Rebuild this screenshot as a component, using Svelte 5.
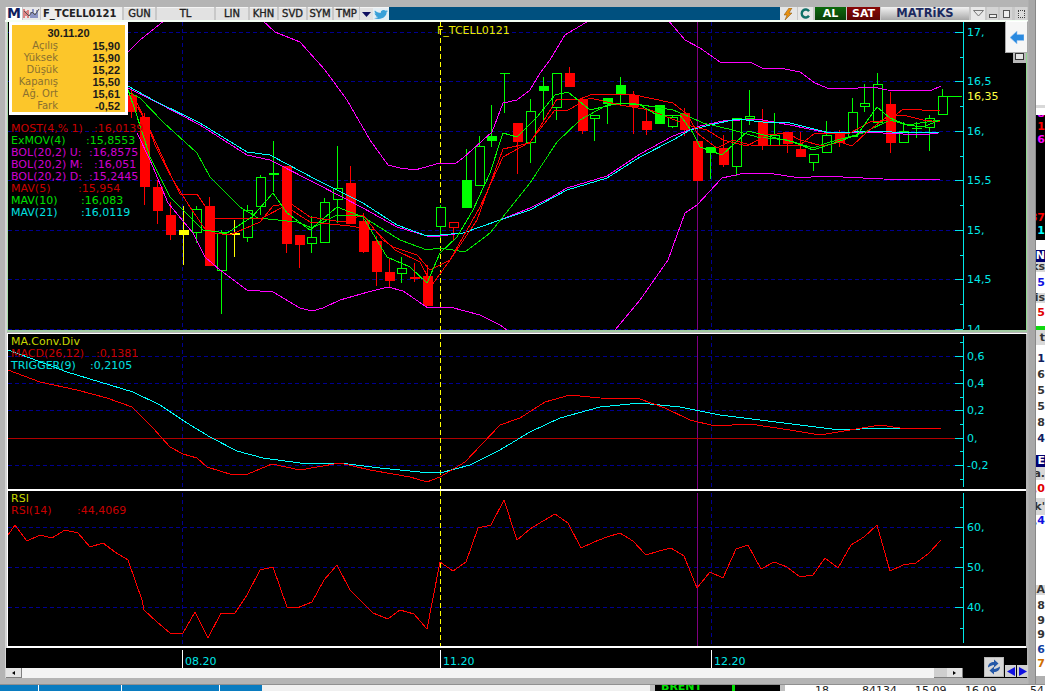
<script>
	// wickTop, wickBottom, bodyTop, bodyBottom, kind (r red, g green, h hollow green, o hollow red, y yellow)
	const candles = [
		[90, 118, 95, 112, 'r'], [113, 205, 117, 187, 'r'], [180, 224, 187, 211, 'r'], [202, 240, 215, 235, 'r'],
		[206, 265, 230, 235, 'y'], [206, 243, 209, 232, 'h'], [197, 266, 206, 266, 'r'], [230, 314, 233, 270, 'h'],
		[220, 257, 233, 235, 'y'], [205, 242, 210, 237, 'h'], [175, 215, 177, 206, 'h'], [141, 192, 173, 175, 'g'],
		[166, 253, 166, 244, 'r'], [235, 268, 235, 245, 'r'], [216, 253, 237, 243, 'h'], [198, 242, 202, 242, 'h'],
		[146, 223, 188, 199, 'h'], [166, 224, 183, 224, 'r'], [213, 253, 221, 252, 'r'], [236, 286, 241, 272, 'r'],
		[259, 287, 272, 281, 'r'], [257, 283, 268, 273, 'h'], [263, 282, 277, 279, 'r'], [265, 306, 276, 306, 'r'],
		[205, 238, 207, 226, 'h'], [222, 240, 222, 227, 'o'], [149, 208, 180, 208, 'g'], [136, 185, 146, 185, 'h'],
		[105, 147, 136, 141, 'g'], [73, 113, 73, 74, 'g'], [123, 174, 123, 142, 'r'], [99, 163, 111, 142, 'h'],
		[77, 122, 86, 91, 'g'], [73, 120, 73, 107, 'h'], [67, 87, 73, 87, 'r'], [97, 134, 99, 131, 'r'],
		[115, 141, 115, 118, 'h'], [98, 124, 98, 104, 'g'], [77, 105, 85, 94, 'g'], [91, 134, 95, 107, 'r'],
		[110, 135, 121, 130, 'r'], [105, 124, 105, 124, 'g'], [115, 128, 117, 126, 'h'], [108, 136, 113, 130, 'r'],
		[141, 181, 141, 181, 'r'], [147, 179, 147, 153, 'g'], [135, 167, 148, 165, 'r'], [118, 176, 118, 166, 'h'],
		[90, 125, 116, 118, 'h'], [109, 150, 121, 145, 'r'], [113, 145, 135, 145, 'h'], [132, 153, 132, 144, 'r'],
		[132, 157, 149, 157, 'r'], [154, 171, 154, 162, 'h'], [121, 153, 135, 152, 'h'], [130, 147, 134, 143, 'r'],
		[98, 137, 112, 136, 'h'], [84, 112, 103, 106, 'h'], [73, 122, 84, 122, 'h'], [92, 153, 104, 143, 'r'],
		[122, 142, 131, 142, 'h'], [122, 138, 128, 129, 'g'], [115, 151, 118, 127, 'h'], [89, 114, 96, 114, 'h']
	];

	const candleX = (i) => Math.round(131.4 + 12.86 * i);
	const colors = { r: '#ff0000', g: '#00ff00', h: '#00ff00', o: '#ff0000', y: '#ffff00' };

	const priceLines = [
		{
			color: '#ff00ff',
			pts: '128,52 140,40 165,20 M262,20 275,32 300,42 325,70 347,100 370,140 388,165 400,168 415,170 440,163 455,164 463,158 492,132 503,103 517,100 530,90 540,73 550,60 565,35 590,20 M668,20 685,40 700,48 720,62 750,62 762,68 780,68 800,72 815,83 827,88 843,89 873,87 887,90 930,91 941,86'
		},
		{
			color: '#ff00ff',
			pts: '137,133 150,160 168,203 193,233 205,257 220,270 247,290 273,292 300,308 312,311 323,308 340,300 368,292 388,287 403,291 428,308 450,307 480,315 500,325 515,336 M610,336 640,300 668,260 685,213 697,205 722,178 745,173 768,173 800,178 822,176 883,179 940,180'
		},
		{
			color: '#ff00ff',
			pts: '128,88 160,104 200,125 247,155 270,160 317,184 363,208 397,227 427,236 440,236 463,233 500,220 530,208 550,198 567,188 607,176 640,154 673,136 700,126 723,121 757,119 790,125 823,132 883,133 923,135 938,133'
		},
		{
			color: '#00ffff',
			pts: '128,86 153,100 200,123 247,152 270,155 317,180 363,203 397,225 427,236 440,235 463,233 500,220 530,210 567,190 607,178 640,157 673,140 690,130 710,125 737,119 763,122 790,123 830,133 877,131 907,133 940,132'
		},
		{
			color: '#00e800',
			pts: '128,92 140,98 163,122 197,153 210,177 240,207 258,218 297,222 312,228 337,215 360,215 400,240 427,250 440,248 465,252 490,233 530,183 557,142 580,120 607,105 630,103 673,110 690,117 703,123 733,130 757,137 787,140 813,148 830,142 863,133 890,120 907,125 940,120'
		},
		{
			color: '#ff0000',
			pts: '132,93 150,130 173,180 190,207 207,232 230,235 260,222 273,206 290,203 310,217 343,222 363,215 383,240 393,247 417,255 430,270 450,260 477,220 503,149 530,143 557,99 577,100 593,94 630,94 673,103 688,115 697,133 717,148 733,140 750,145 790,146 800,145 815,133 850,133 870,122 890,120 903,109 940,111'
		},
		{
			color: '#ff0000',
			pts: '130,95 148,125 155,145 180,194 197,194 213,218 262,218 285,206 310,222 350,226 375,230 395,250 420,262 432,285 450,260 480,207 503,157 530,142 555,110 568,110 590,98 620,105 650,110 687,125 707,130 723,140 747,146 767,135 787,133 800,140 823,146 840,142 852,146 867,132 887,117 903,115 923,120 940,122'
		},
		{
			color: '#00ff00',
			pts: '128,90 135,110 150,157 170,197 203,230 227,233 252,217 273,193 287,213 310,230 337,207 363,217 387,257 410,267 427,283 440,253 457,237 473,210 490,173 503,133 517,137 537,117 555,95 568,92 590,110 620,103 640,105 657,115 680,115 693,133 700,147 722,155 748,131 772,137 793,142 813,150 837,142 857,135 877,107 890,118 907,125 923,127 940,120'
		}
	];

	const macdLines = [
		{
			color: '#00ffff',
			pts: '8,350 30,358 67,372 100,382 133,392 160,405 187,423 210,437 237,451 263,458 300,463 340,463 380,468 420,472 440,473 470,465 500,450 530,432 560,418 600,407 640,403 680,407 720,415 760,420 800,425 840,430 880,428 940,428'
		},
		{
			color: '#ff0000',
			pts: '8,370 40,382 77,390 107,398 132,407 153,428 170,447 183,454 197,458 207,467 233,475 248,474 272,464 300,470 340,463 370,470 410,477 427,482 440,477 465,462 500,425 520,418 545,402 570,395 600,398 640,399 665,408 690,420 715,426 750,424 790,430 820,435 850,430 880,425 900,428 941,428'
		}
	];

	const rsiLine =
		'8,535 15,525 27,541 40,535 52,538 65,530 78,533 90,547 103,543 115,552 128,560 142,600 144,610 157,622 170,633 183,633 195,612 208,638 221,613 235,613 247,595 260,570 273,567 287,607 297,608 312,602 324,580 337,565 350,590 360,600 373,613 388,619 400,610 414,614 427,629 440,562 453,571 466,562 478,528 491,525 504,500 517,540 530,529 543,521 555,514 568,523 581,548 594,542 607,537 620,533 633,541 646,555 659,551 671,548 684,556 697,588 710,572 723,578 736,549 748,545 761,569 774,562 787,567 800,577 813,575 825,558 838,568 851,545 864,537 877,525 890,571 903,565 916,563 929,553 941,540';

	const info = [
		['Açılış', '15,90'],
		['Yüksek', '15,90'],
		['Düşük', '15,22'],
		['Kapanış', '15,50'],
		['Ağ. Ort', '15,61'],
		['Fark', '-0,52']
	];

	const legend = [
		{ name: 'MOST(4,% 1)', value: ':16,0139', at: 83, color: '#c80000' },
		{ name: 'ExMOV(4)', value: ':15,8553', at: 75, color: '#00d800' },
		{ name: 'BOL(20,2) U:', value: ':16,8575', at: 78, color: '#d000d0' },
		{ name: 'BOL(20,2) M:', value: ':16,051', at: 83, color: '#d000d0' },
		{ name: 'BOL(20,2) D:', value: ':15,2445', at: 78, color: '#d000d0' },
		{ name: 'MAV(5)', value: ':15,954', at: 67, color: '#c80000' },
		{ name: 'MAV(10)', value: ':16,083', at: 70, color: '#00e000' },
		{ name: 'MAV(21)', value: ':16,0119', at: 70, color: '#00e0e0' }
	];

	const tabs = [
		{ label: 'GUN', w: 31 },
		{ label: 'TL', w: 57 },
		{ label: 'LIN', w: 32 },
		{ label: 'KHN', w: 27 },
		{ label: 'SVD', w: 27 },
		{ label: 'SYM', w: 24 },
		{ label: 'TMP', w: 25 }
	];

	const priceAxis = {
		ticks: [[32, '17,'], [81, '16,5'], [131, '16,'], [180, '15,5'], [230, '15,'], [279, '14,5'], [329, '14,']],
		minor: [57, 106, 156, 205, 255, 304],
		top: 22,
		bottom: 329
	};
	const macdAxis = {
		ticks: [[356, '0,6'], [383, '0,4'], [410, '0,2'], [438, '0,'], [465, '-0,2']],
		minor: [342, 370, 397, 424, 451, 479],
		top: 336,
		bottom: 487
	};
	const rsiAxis = {
		ticks: [[527, '60,'], [567, '50,'], [607, '40,']],
		minor: [507, 547, 587, 628],
		top: 493,
		bottom: 643
	};

	const sideRows = [
		{ h: 105, kind: 'white' },
		{ h: 3, kind: 'grey' },
		{ h: 7, kind: 'white' },
		{ h: 125, kind: 'dark', lines: [['8', '#ff00ff'], ['1', '#ff0000'], ['6', '#ff00ff'], ['', ''], ['', ''], ['', ''], ['', ''], ['', ''], ['87', '#ff0000'], ['1', '#00ffff']] },
		{ h: 10, kind: 'white' },
		{ h: 12, kind: 'navy', text: 'N' },
		{ h: 10, kind: 'grey', text: 'ks' },
		{ h: 21, kind: 'white', text: '5', color: '#1010e0' },
		{ h: 10, kind: 'grey', text: 'is' },
		{ h: 19, kind: 'white', text: '5', color: '#e00000' },
		{ h: 4, kind: 'white' },
		{ h: 4, kind: 'green' },
		{ h: 15, kind: 'grey', text: 't' },
		{ h: 110, kind: 'white', lines: [['1', '#102060'], ['6', '#333'], ['5', '#333'], ['5', '#333'], ['8', '#333'], ['4', '#102060']], step: 16 },
		{ h: 12, kind: 'navy', text: 'E' },
		{ h: 13, kind: 'grey', text: 'a.' },
		{ h: 18, kind: 'white', text: ',0', color: '#e00000' },
		{ h: 17, kind: 'grey', text: "k'" },
		{ h: 70, kind: 'white', text: ',4', color: '#1010e0', top: true },
		{ h: 10, kind: 'grey', text: 'A' },
		{ h: 81, kind: 'white', lines: [['8', '#333'], ['9', '#333'], ['9', '#333'], ['6', '#1040a0'], ['7', '#d07000']], step: 14.5 }
	];
</script>

{#snippet grid(rows, top, bottom)}
	{#each rows as y}
		<line class="grid" x1="8" x2="955" y1={y + 0.5} y2={y + 0.5} />
	{/each}
	<line class="grid" x1="182.5" x2="182.5" y1={top} y2={bottom} />
	<line class="grid" x1="711.5" x2="711.5" y1={top} y2={bottom} />
	<line class="cross" x1="697.5" x2="697.5" y1={top} y2={bottom} />
{/snippet}

{#snippet axis(a)}
	<line class="axis" x1="963.5" x2="963.5" y1={a.top} y2={a.bottom} />
	{#each a.minor as y}
		<line class="axis" x1="960" x2="963" y1={y + 0.5} y2={y + 0.5} />
	{/each}
	{#each a.ticks as [y, label]}
		<line class="axis" x1="955" x2="963" y1={y + 0.5} y2={y + 0.5} />
		<text class="axis-label" x="967" y={y + 4}>{label}</text>
	{/each}
{/snippet}

<div class="desk">
	<div class="upper">
		<div class="window">
			<div class="toolbar">
				<div class="logo">M</div>
				<div class="chart-icon">
					<svg width="17" height="13" viewBox="0 0 17 13">
						<path d="M1 2v9M3 4v5M5 3v8" stroke="#d02020" fill="none" />
						<path d="M8 5v6M10 2v9M12 6v5M14 3v8" stroke="#3040a0" fill="none" />
						<path d="M1 4 6 9 9 5 12 8 16 2" stroke="#555" fill="none" />
					</svg>
				</div>
				<div class="symbol">F_TCELL0121</div>
				{#each tabs as tab}
					<div class="tab" style:width="{tab.w}px">{tab.label}</div>
				{/each}
				<div class="tab drop">
					<svg width="9" height="6" viewBox="0 0 9 6"><path d="M0 0h9L4.500 5z" fill="#101060" /></svg>
				</div>
				<div class="tab bird">
					<svg width="14" height="11" viewBox="0 0 24 24" preserveAspectRatio="none">
						<path fill="#3aa0d8" d="M23.950 4.570a10 10 0 0 1-2.820.77 4.960 4.960 0 0 0 2.160-2.720c-.95.55-2 .95-3.120 1.180a4.920 4.920 0 0 0-8.380 4.480C7.690 8.100 4.070 6.130 1.640 3.160a4.820 4.820 0 0 0-.67 2.480c0 1.700.87 3.200 2.190 4.100a4.900 4.900 0 0 1-2.230-.61v.06c0 2.380 1.700 4.370 3.950 4.820a5 5 0 0 1-2.210.08 4.940 4.940 0 0 0 4.600 3.420A9.870 9.870 0 0 1 0 19.540a13.940 13.940 0 0 0 7.550 2.210c9.050 0 14-7.500 14-13.980 0-.21 0-.42-.02-.63a9.940 9.940 0 0 0 2.460-2.550z" />
					</svg>
				</div>
				<div class="bar-fill"></div>
				<div class="tools">
					<div class="tool bolt">
						<svg width="9" height="12" viewBox="0 0 9 12"><path d="M5 0 0 7h3l-2 5 7-7H5l3-5z" fill="#e89010" stroke="#805010" stroke-width=".5" /></svg>
					</div>
					<div class="tool again">
						<svg width="11" height="11" viewBox="0 0 11 11"><path d="M9 3.200A4 4 0 1 0 9 7.800" fill="none" stroke="#107068" stroke-width="2.400" /></svg>
					</div>
					<div class="trade al">AL</div>
					<div class="trade sat">SAT</div>
					<div class="brand">MATRiKS</div>
					<div class="winbtn drop-btn">
						<svg width="11" height="7" viewBox="0 0 11 7"><path d="M.5.500h10L5.500 6z" fill="#e8e8e8" stroke="#777" /></svg>
					</div>
					<div class="winbtn min-btn"><span class="glyph-min"></span></div>
					<div class="winbtn max-btn"><span class="glyph-max"></span></div>
					<div class="winbtn close-btn"><span class="glyph-close"></span></div>
				</div>
			</div>

			<div class="panes">
				<div class="pane top-pane">
					<svg class="chart" width="1018" height="308" viewBox="8 22 1018 308">
						{@render grid([32, 81, 131, 180, 230, 279, 329], 22, 331)}
						<line class="marker" x1="440.500" x2="440.500" y1="22" y2="331" />
						{#each candles as [wt, wb, bt, bb, kind], i}
							{@const x = candleX(i)}
							<line x1={x + 0.5} x2={x + 0.5} y1={wt} y2={wb} stroke={colors[kind]} />
							{#if kind === 'h' || kind === 'o'}
								<rect x={x - 4 + 0.5} y={bt + 0.5} width="9" height={bb - bt} fill="#000" stroke={colors[kind]} />
							{:else}
								<rect x={x - 4.5} y={bt} width="10" height={Math.max(bb - bt, 1)} fill={colors[kind]} />
							{/if}
						{/each}
						{#each priceLines as l}
							{#each l.pts.split(' M') as part}
								<polyline class="line" points={part} stroke={l.color} />
							{/each}
						{/each}
						<line x1="947" x2="962" y1="96.500" y2="96.500" stroke="#00ff00" />
						{@render axis(priceAxis)}
						<text class="axis-label last" x="967" y="100">16,35</text>
						<text class="title" x="437" y="34">F_TCELL0121</text>
					</svg>

					<div class="info">
						<div class="info-date">30.11.20</div>
						{#each info as [label, value]}
							<div class="info-row"><span>{label}</span><b>{value}</b></div>
						{/each}
					</div>

					<div class="legend">
						{#each legend as item}
							<div class="legend-row" style:color={item.color}>
								<span class="legend-name" style:width="{item.at}px">{item.name}</span>{item.value}
							</div>
						{/each}
					</div>

					<div class="side-tab">
						<svg width="14" height="13" viewBox="0 0 14 13">
							<path d="M0 6.500 7 0v3.500h7v6H7V13z" fill="#2a8ae0" stroke="#a0c8f0" stroke-width=".6" />
						</svg>
					</div>
					<div class="side-stub"><span></span></div>
				</div>

				<div class="pane macd">
					<svg class="chart" width="1018" height="155" viewBox="8 334 1018 155">
						{@render grid([356, 383, 410, 465], 336, 489)}
						<line x1="8" x2="963" y1="438.500" y2="438.500" stroke="#b00000" />
						<line class="marker" x1="440.500" x2="440.500" y1="334" y2="489" />
						{#each macdLines as l}
							<polyline class="line" points={l.pts} stroke={l.color} />
						{/each}
						{@render axis(macdAxis)}
					</svg>
					<div class="legend low">
						<div class="legend-row name">MA.Conv.Div</div>
						<div class="legend-row red"><span class="legend-name w-macd">MACD(26,12)</span>:0,1381</div>
						<div class="legend-row cyan"><span class="legend-name w-trig">TRIGGER(9)</span>:0,2105</div>
					</div>
				</div>

				<div class="pane rsi">
					<svg class="chart" width="1018" height="155" viewBox="8 491 1018 155">
						{@render grid([527, 567, 607], 493, 646)}
						<line class="marker" x1="440.500" x2="440.500" y1="491" y2="646" />
						<polyline class="line" points={rsiLine} stroke="#ff0000" />
						{@render axis(rsiAxis)}
					</svg>
					<div class="legend low">
						<div class="legend-row name">RSI</div>
						<div class="legend-row red"><span class="legend-name w-rsi">RSI(14)</span>:44,4069</div>
					</div>
				</div>

				<div class="time-block">
					<svg class="time" width="1021" height="20" viewBox="6 648 1021 20">
						{#each [[182, '08.20'], [440, '11.20'], [711, '12.20']] as [x, label]}
							<line x1={x + 0.5} x2={x + 0.5} y1="650" y2="668" stroke="#fff" />
							<text class="axis-label" x={x + 3} y="665">{label}</text>
						{/each}
					</svg>
					<div class="hscroll">
						<div class="sbtn left"><i class="arrow-l"></i></div>
						<div class="sthumb"></div>
						<div class="sbtn right"><i class="arrow-r"></i></div>
					</div>
					<div class="nav">
						<div class="refresh">
							<svg width="16" height="16" viewBox="0 0 16 16">
								<path d="M2 8.500C2 4.500 5 3 8 3V0.500L12.500 4.500 8 8.500V6C6 6 4.500 7 2 8.500z" fill="#2458a8" />
								<path d="M14 7.500C14 11.500 11 13 8 13V15.500L3.500 11.500 8 7.500V10C10 10 11.500 9 14 7.500z" fill="#2458a8" />
							</svg>
						</div>
						<div class="step"><svg width="8" height="9" viewBox="0 0 8 9"><path d="M8 0v9L0 4.500z" fill="#1010e0" /></svg></div>
						<div class="step"><svg width="8" height="9" viewBox="0 0 8 9"><path d="M0 0v9l8-4.500z" fill="#1010e0" /></svg></div>
					</div>
				</div>
			</div>
		</div>

		<div class="side">
			{#each sideRows as row}
				<div class="side-row {row.kind}" class:at-top={row.top} style:height="{row.h}px" style:color={row.color}>
					{#if row.lines}
						{#each row.lines as [t, c]}
							<div class="side-line" style:color={c} style:height="{row.step ?? 13}px">{t}</div>
						{/each}
					{:else}
						<span>{row.text ?? ''}</span>
					{/if}
				</div>
			{/each}
		</div>
	</div>

	<div class="taskbar">
		<div class="tasks">
			<span class="task w1"></span>
			<span class="task w2"></span>
			<span class="task w3"></span>
			<span class="task w4"></span>
		</div>
		<div class="task-gap"></div>
		<div class="peek-btn"></div>
		<div class="peek">BRENT<i class="peek-mark"></i></div>
		<div class="peek-btn"></div>
		<div class="numbers">
			<span class="n1">18</span>
			<span class="n2">84134</span>
			<span class="n3">15,09</span>
			<span class="n4">16,09</span>
			<span class="n5">54</span>
		</div>
	</div>
</div>

<style>
	:global(body) {
		margin: 0;
		background: #b0b0b0;
	}

	.desk {
		width: 1045px;
		height: 691px;
		overflow: hidden;
		font-family: 'DejaVu Sans', Verdana, sans-serif;
		font-size: 11px;
	}

	.upper {
		display: flex;
		height: 684px;
	}

	.window {
		width: 1036px;
		flex: none;
		box-sizing: border-box;
		padding: 7px 0 6px 5px;
		background: linear-gradient(90deg, #b4b4b4 1028px, #a8a8a8 1029px, #a8a8a8 1035px, #888 1035px);
	}

	.toolbar {
		display: flex;
		height: 13px;
		width: 1023px;
		gap: 2px;
		background: #c8c8c8;
		border-bottom: 2px solid #f4fff4;
	}

	.logo {
		width: 16px;
		margin-left: 1px;
		background: #fff;
		color: #102060;
		font-weight: bold;
		font-size: 14px;
		line-height: 13px;
		text-align: center;
	}

	.chart-icon {
		width: 17px;
		margin-left: -1px;
		background: #e8e8e8;
		line-height: 0;
	}

	.symbol {
		width: 81px;
		margin-left: -1px;
		background: #ececec;
		color: #222;
		font-weight: bold;
		font-size: 10px;
		line-height: 13px;
		padding-left: 2px;
		box-sizing: border-box;
		white-space: nowrap;
		overflow: hidden;
	}

	.tab {
		background: #e2e2e2;
		border-top: 1px solid #f4f4f4;
		box-sizing: border-box;
		color: #222;
		font-size: 10px;
		-webkit-text-stroke: 0.35px #222;
		line-height: 12px;
		text-align: center;
		white-space: nowrap;
		overflow: hidden;
	}

	.drop {
		width: 13px;
		margin-left: -1px;
		line-height: 9px;
		padding-top: 2px;
	}

	.bird {
		width: 16px;
		margin-left: -2px;
		background: #e4eef4;
		line-height: 0;
		padding-top: 1px;
	}

	.bar-fill {
		flex: 1;
		margin-left: -2px;
		background: #00507f;
	}

	.tools {
		display: flex;
		margin-left: -2px;
		padding-right: 1px;
	}

	.tool {
		background: #e6e6e6;
		display: flex;
		align-items: center;
		justify-content: center;
	}

	.bolt {
		width: 17px;
	}

	.again {
		width: 15px;
		margin-left: 1px;
	}

	.trade {
		color: #fff;
		font-weight: bold;
		font-size: 11px;
		line-height: 13px;
		text-align: center;
	}

	.al {
		width: 31px;
		margin-left: 2px;
		background: linear-gradient(#0c6a0c, #0a3f0a);
	}

	.sat {
		width: 33px;
		margin-left: 1px;
		background: linear-gradient(#8a0808, #5c0404);
	}

	.brand {
		width: 88px;
		margin-left: 1px;
		background: linear-gradient(#f2f2f2, #a8a8a8);
		color: #1c2a60;
		font-weight: bold;
		font-size: 11.500px;
		line-height: 13px;
		text-align: center;
	}

	.winbtn {
		background: #d4d4d4;
		display: flex;
		align-items: center;
		justify-content: center;
	}

	.drop-btn {
		width: 14px;
		margin-left: 2px;
		background: #e8e8e8;
	}

	.min-btn {
		width: 11px;
		margin-left: 2px;
	}

	.max-btn {
		width: 12px;
		margin-left: 2px;
	}

	.close-btn {
		width: 12px;
		margin-left: 3px;
	}

	.glyph-min {
		width: 6px;
		height: 2px;
		border: 1px solid #555;
		margin-top: 4px;
		background: #eee;
	}

	.glyph-max {
		width: 5px;
		height: 6px;
		border: 1px solid #555;
		background: #eee;
	}

	.glyph-close {
		width: 5px;
		height: 6px;
		border: 1px dotted #444;
		background: #ddd;
	}

	.panes {
		border-left: 2px solid #d4d4d4;
	}

	.pane {
		position: relative;
		background: #000;
		box-sizing: border-box;
		border-left: 1px solid #fff;
	}

	.top-pane {
		width: 1020px;
		height: 310px;
		border-left-color: #a8dca8;
		border-right: 1px solid #90d890;
		border-bottom: 2px solid #a0c8a0;
		margin-bottom: 2px;
		box-shadow: 0 1px 0 #b4b4b4, 0 2px 0 #fff;
	}

	.macd,
	.rsi {
		width: 1019px;
		height: 157px;
		border-bottom: 2px solid #fff;
	}

	.chart {
		display: block;
	}

	.grid {
		stroke: #000090;
		stroke-dasharray: 4 3;
	}

	.cross {
		stroke: #800080;
	}

	.marker {
		stroke: #ffff00;
		stroke-dasharray: 5 3;
	}

	.axis {
		stroke: #00e8e8;
	}

	.axis-label {
		fill: #00e8e8;
		font-size: 11px;
	}

	.last {
		fill: #ffff40;
	}

	.title {
		fill: #e8e800;
		font-size: 11px;
	}

	.line {
		fill: none;
		shape-rendering: crispEdges;
	}

	.chart line,
	.chart rect,
	.time line {
		shape-rendering: crispEdges;
	}

	.info {
		position: absolute;
		left: 1px;
		top: 0;
		width: 113px;
		height: 87px;
		border: 3px solid #fff;
		background: #fcc62a;
		line-height: 12px;
	}

	.info-date {
		text-align: center;
		font-family: 'Liberation Sans', Arial, sans-serif;
		font-weight: bold;
		font-size: 11px;
		color: #1a1a1a;
		padding-top: 2px;
		margin-bottom: 1px;
	}

	.info-row {
		display: flex;
		justify-content: space-between;
		color: #8a7030;
		font-size: 10px;
		padding-right: 5px;
	}

	.info-row span {
		width: 46px;
		text-align: right;
		white-space: nowrap;
	}

	.info-row b {
		color: #1a1a1a;
		font-family: 'Liberation Sans', Arial, sans-serif;
		font-size: 11px;
	}

	.legend {
		position: absolute;
		left: 3px;
		top: 101px;
		line-height: 12px;
		font-size: 11px;
		white-space: nowrap;
	}

	.low {
		top: 2px;
	}

	.legend-row {
		height: 12px;
	}

	.legend-name {
		display: inline-block;
	}

	.name {
		color: #c8d800;
	}

	.red {
		color: #c80000;
	}

	.cyan {
		color: #00e0e0;
	}

	.w-macd {
		width: 85px;
	}

	.w-trig {
		width: 79px;
	}

	.w-rsi {
		width: 66px;
	}

	.side-tab {
		position: absolute;
		right: -2px;
		top: -1px;
		width: 23px;
		height: 32px;
		box-sizing: border-box;
		background: #f6f6f6;
		border: 1px solid #a8a8a8;
		border-top-color: #fff;
		display: flex;
		align-items: center;
		justify-content: center;
	}

	.side-stub {
		position: absolute;
		right: 0;
		top: 31px;
		width: 13px;
		height: 10px;
		background: #b8b8b8;
		display: flex;
		align-items: flex-start;
		justify-content: center;
	}

	.side-stub span {
		width: 7px;
		height: 5px;
		border: 1px solid #333;
		background: #e4e4e4;
	}

	.time-block {
		position: relative;
		width: 1021px;
		height: 30px;
		margin-left: -1px;
		background: #000;
	}

	.time {
		display: block;
	}

	.hscroll {
		display: flex;
		width: 957px;
		height: 10px;
		background: #f4f4f4;
	}

	.sbtn {
		width: 16px;
		box-sizing: border-box;
		background: #e4e4e4;
		border-right: 1px solid #808080;
		border-bottom: 1px solid #808080;
		display: flex;
		align-items: center;
		justify-content: center;
	}

	.left {
		margin-right: auto;
	}

	.sthumb {
		width: 13px;
		box-sizing: border-box;
		background: #cfcfcf;
		border-bottom: 1px solid #808080;
	}

	.arrow-l,
	.arrow-r {
		width: 0;
		height: 0;
		border-top: 2px solid transparent;
		border-bottom: 2px solid transparent;
	}

	.arrow-l {
		border-right: 3px solid #000;
	}

	.arrow-r {
		border-left: 3px solid #000;
	}

	.nav {
		position: absolute;
		left: 978px;
		bottom: 1px;
		display: flex;
		align-items: flex-end;
		gap: 1px;
	}

	.refresh {
		width: 20px;
		height: 20px;
		box-sizing: border-box;
		background: #d8d8d8;
		border: 1px solid #b8b8b8;
		display: flex;
		align-items: center;
		justify-content: center;
	}

	.step {
		width: 11px;
		height: 12px;
		background: #d0d0d0;
		display: flex;
		align-items: center;
		justify-content: center;
	}

	.side {
		flex: 1;
		min-width: 0;
		font-weight: bold;
		font-size: 11px;
		overflow: hidden;
	}

	.side-row {
		box-sizing: border-box;
		overflow: hidden;
		display: flex;
		flex-direction: column;
		align-items: flex-end;
		justify-content: center;
		line-height: 12px;
		color: #333;
	}

	.at-top {
		justify-content: flex-start;
	}

	.white {
		background: #fff;
	}

	.grey {
		background: #d8d8d8;
	}

	.dark {
		background: #000;
		justify-content: flex-start;
	}

	.dark .side-line:first-child {
		margin-top: -8px;
	}

	.navy {
		background: #000070;
		color: #fff;
	}

	.green {
		background: #10d810;
	}

	.side-line {
		line-height: 13px;
		flex: none;
	}

	.taskbar {
		display: flex;
		height: 7px;
		overflow: hidden;
		background: #ececec;
		font-size: 11px;
		border-top: 1px solid #909090;
		box-sizing: border-box;
	}

	.tasks {
		display: flex;
		width: 262px;
		flex: none;
		background: #0a7cc0;
	}

	.task {
		height: 100%;
		border-right: 1px solid #fff;
		box-sizing: border-box;
	}

	.w1 {
		width: 39px;
	}

	.w2 {
		width: 83px;
	}

	.w3 {
		width: 98px;
	}

	.w4 {
		width: 42px;
		border-right: none;
	}

	.task-gap {
		width: 388px;
		flex: none;
		background: #f0f0f0;
	}

	.peek-btn {
		width: 5px;
		flex: none;
		background: #c0c0c0;
	}

	.peek {
		display: flex;
		width: 125px;
		flex: none;
		background: #000;
		color: #00e000;
		font-weight: bold;
		line-height: 9px;
		padding-left: 6px;
		box-sizing: border-box;
		margin-top: -3px;
	}

	.peek-mark {
		width: 3px;
		height: 8px;
		margin: 3px 45px 0 auto;
		background: #00e000;
	}

	.numbers {
		position: relative;
		flex: 1;
		background: #fff;
		color: #222;
		line-height: 12px;
		white-space: nowrap;
	}

	.numbers span {
		position: absolute;
		top: 0;
	}

	.n1 {
		left: 30px;
	}

	.n2 {
		left: 77px;
	}

	.n3 {
		left: 130px;
	}

	.n4 {
		left: 180px;
	}

	.n5 {
		left: 245px;
	}
</style>
